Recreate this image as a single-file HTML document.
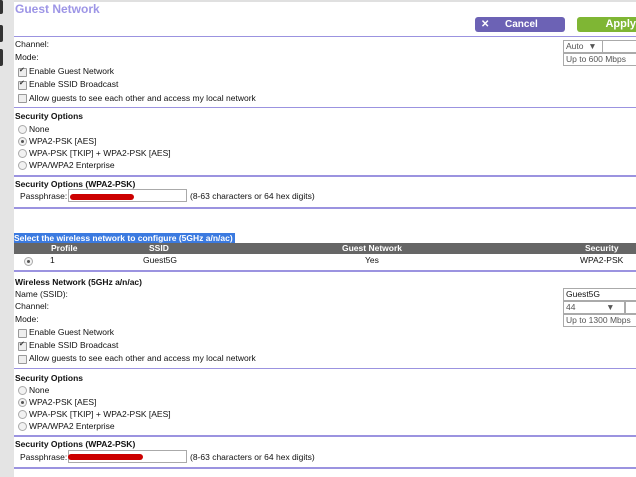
<!DOCTYPE html>
<html><head><style>
body{margin:0;width:636px;height:477px;overflow:hidden;background:#fff;font-family:"Liberation Sans",Arial,sans-serif;font-size:8.5px;color:#111;position:relative}
.a{position:absolute;white-space:nowrap;line-height:11px}
.b{font-weight:bold}
.hr{position:absolute;left:14px;right:0;height:2px;background:#9b93e0}
.cb{position:absolute;width:7px;height:7px;border:1px solid #999;background:#eee;border-radius:1px}
.cb.k::after{content:"✔";position:absolute;left:0;top:-3px;font-size:7px;color:#333}
.rd{position:absolute;width:7px;height:7px;border:1px solid #aaa;border-radius:50%;background:#f2f2f2}
.rd.k::after{content:"";position:absolute;left:2px;top:2px;width:3px;height:3px;border-radius:50%;background:#555}
.in{position:absolute;border:1px solid #aaa;background:#fff;height:11px;line-height:11px;padding-left:2px;color:#555;white-space:nowrap}
.red{position:absolute;height:6px;background:#c00;border-radius:3px}
</style></head><body>
<div style="position:absolute;left:0;top:0;width:14px;height:477px;background:#e4e4e4"></div>
<div style="position:absolute;left:0;top:0;width:3px;height:14px;background:#333;border-radius:0 2px 2px 0"></div>
<div style="position:absolute;left:0;top:25px;width:3px;height:17px;background:#333;border-radius:0 2px 2px 0"></div>
<div style="position:absolute;left:0;top:49px;width:3px;height:17px;background:#333;border-radius:0 2px 2px 0"></div>
<div style="position:absolute;left:14px;top:0;width:622px;height:2px;background:#e0e0e0"></div>
<div class="a" style="left:15px;top:2px;font-size:12px;line-height:15px;font-weight:bold;color:#9d95e6">Guest Network</div>
<div style="position:absolute;left:475px;top:17px;width:90px;height:15px;background:#6c62b5;border-radius:3px;color:#fff;font-weight:bold;font-size:10px;line-height:15px"><span style="position:absolute;left:6px">✕</span><span style="position:absolute;left:30px">Cancel</span></div>
<div style="position:absolute;left:577px;top:17px;width:70px;height:15px;background:#7fb634;border-radius:3px;color:#fff;font-weight:bold;font-size:11px;line-height:15px"><span style="position:absolute;left:0;width:59px;text-align:right">Apply</span></div>
<div class="hr" style="top:36px;height:1px"></div>
<div class="a" style="left:15px;top:39px">Channel:</div>
<div class="a" style="left:15px;top:52px">Mode:</div>
<div class="in" style="left:563px;top:40px;width:36px">Auto &nbsp;▼</div>
<div class="in" style="left:602px;top:40px;width:40px"></div>
<div class="in" style="left:563px;top:53px;width:80px">Up to 600 Mbps</div>
<div class="cb k" style="left:18px;top:68px"></div><div class="a" style="left:29px;top:66px">Enable Guest Network</div>
<div class="cb k" style="left:18px;top:81px"></div><div class="a" style="left:29px;top:79px">Enable SSID Broadcast</div>
<div class="cb" style="left:18px;top:94px"></div><div class="a" style="left:29px;top:93px">Allow guests to see each other and access my local network</div>
<div class="hr" style="top:107px;height:1px"></div>
<div class="a b" style="left:15px;top:111px">Security Options</div>
<div class="rd" style="left:18px;top:125px"></div><div class="a" style="left:29px;top:124px">None</div>
<div class="rd k" style="left:18px;top:137px"></div><div class="a" style="left:29px;top:136px">WPA2-PSK [AES]</div>
<div class="rd" style="left:18px;top:149px"></div><div class="a" style="left:29px;top:148px">WPA-PSK [TKIP] + WPA2-PSK [AES]</div>
<div class="rd" style="left:18px;top:161px"></div><div class="a" style="left:29px;top:160px">WPA/WPA2 Enterprise</div>
<div class="hr" style="top:175px"></div>
<div class="a b" style="left:15px;top:179px">Security Options (WPA2-PSK)</div>
<div class="a" style="left:20px;top:191px">Passphrase:</div>
<div class="in" style="left:68px;top:189px;width:115px"></div><div class="red" style="left:70px;top:194px;width:64px"></div>
<div class="a" style="left:190px;top:191px">(8-63 characters or 64 hex digits)</div>
<div class="hr" style="top:207px"></div>
<div class="a b" style="left:14px;top:233px;background:#3b7ae0;color:#fff;padding-right:2px">Select the wireless network to configure (5GHz a/n/ac)</div>
<div style="position:absolute;left:14px;top:243px;width:622px;height:11px;background:#666"></div>
<div class="a b" style="left:51px;top:243px;color:#fff">Profile</div>
<div class="a b" style="left:149px;top:243px;color:#fff">SSID</div>
<div class="a b" style="left:342px;top:243px;color:#fff">Guest Network</div>
<div class="a b" style="left:585px;top:243px;color:#fff">Security</div>
<div class="rd k" style="left:24px;top:257px"></div>
<div class="a" style="left:50px;top:255px">1</div>
<div class="a" style="left:143px;top:255px">Guest5G</div>
<div class="a" style="left:365px;top:255px">Yes</div>
<div class="a" style="left:580px;top:255px">WPA2-PSK</div>
<div class="hr" style="top:270px"></div>
<div class="a b" style="left:15px;top:277px">Wireless Network (5GHz a/n/ac)</div>
<div class="a" style="left:15px;top:289px">Name (SSID):</div>
<div class="a" style="left:15px;top:301px">Channel:</div>
<div class="a" style="left:15px;top:314px">Mode:</div>
<div class="in" style="left:563px;top:288px;width:80px;color:#111">Guest5G</div>
<div class="in" style="left:563px;top:301px;width:58px">44 &nbsp; &nbsp; &nbsp; &nbsp; &nbsp; &nbsp; ▼</div>
<div class="in" style="left:625px;top:301px;width:20px"></div>
<div class="in" style="left:563px;top:314px;width:80px">Up to 1300 Mbps</div>
<div class="cb" style="left:18px;top:329px"></div><div class="a" style="left:29px;top:327px">Enable Guest Network</div>
<div class="cb k" style="left:18px;top:342px"></div><div class="a" style="left:29px;top:340px">Enable SSID Broadcast</div>
<div class="cb" style="left:18px;top:355px"></div><div class="a" style="left:29px;top:353px">Allow guests to see each other and access my local network</div>
<div class="hr" style="top:368px;height:1px"></div>
<div class="a b" style="left:15px;top:373px">Security Options</div>
<div class="rd" style="left:18px;top:386px"></div><div class="a" style="left:29px;top:385px">None</div>
<div class="rd k" style="left:18px;top:398px"></div><div class="a" style="left:29px;top:397px">WPA2-PSK [AES]</div>
<div class="rd" style="left:18px;top:410px"></div><div class="a" style="left:29px;top:409px">WPA-PSK [TKIP] + WPA2-PSK [AES]</div>
<div class="rd" style="left:18px;top:422px"></div><div class="a" style="left:29px;top:421px">WPA/WPA2 Enterprise</div>
<div class="hr" style="top:435px"></div>
<div class="a b" style="left:15px;top:439px">Security Options (WPA2-PSK)</div>
<div class="a" style="left:20px;top:452px">Passphrase:</div>
<div class="in" style="left:68px;top:450px;width:115px"></div><div class="red" style="left:68px;top:454px;width:75px"></div>
<div class="a" style="left:190px;top:452px">(8-63 characters or 64 hex digits)</div>
<div class="hr" style="top:467px"></div>
</body></html>
